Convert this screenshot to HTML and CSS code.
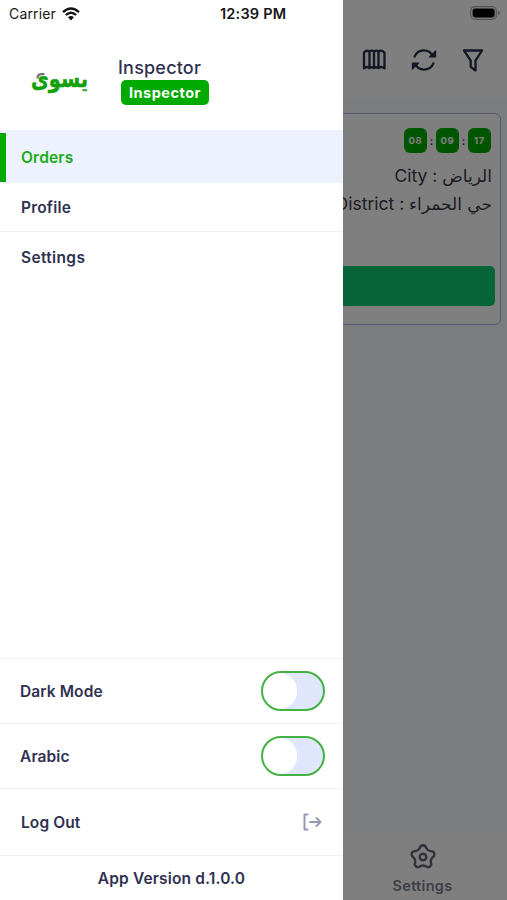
FILE: index.html
```html
<!DOCTYPE html>
<html lang="en">
<head>
<meta charset="utf-8">
<title>Orders</title>
<link rel="stylesheet" href="styles.css">
</head>
<body>
<div class="app">
  <main class="screen">
    <header class="topbar">
      <div class="battery-row">
        <svg class="battery" width="30" height="14" viewBox="0 0 30 14"><rect x=".7" y=".7" width="25.600" height="12.600" rx="4" fill="none" stroke="#aaa" stroke-width="1.200"/><rect x="2.600" y="2.600" width="22" height="8.800" rx="2.400" fill="#000"/><path d="M28 5v4q2-.6 2-2t-2-2z" fill="#aaa"/></svg>
      </div>
      <nav class="tools">
        <svg class="icon" width="24" height="22" viewBox="0 0 24 22"><path d="M2 3.600Q4.500.6 7.500 2.600 9.750.6 12 2.600 14.250.6 16.500 2.600 19.500.6 22.500 3.600V19.400Q19.500 16.800 16.500 19.200 14.250 17.200 12 19.200 9.750 17.200 7.500 19.200 4.500 16.800 2 19.400ZM7.500 2.600v16.600M12 2.600v16.600M16.500 2.600v16.600"/></svg>
        <svg class="icon" width="26" height="24" viewBox="0 0 26 24"><path d="M3.600 8.600A10 10 0 0 1 21.800 8M22.400 15.400A10 10 0 0 1 4.200 16"/><path d="M24.600 3v6h-6.200zM1.400 21v-6h6.200z" fill="#29304a" stroke-width="1.200"/></svg>
        <svg class="icon" width="22" height="24" viewBox="0 0 22 24"><path d="M2 2.500H20L13.500 12.600V22.500L8.700 18.800V12.600Z"/></svg>
      </nav>
    </header>
    <section class="content">
      <article class="order">
        <div class="timer"><b>08</b><i>:</i><b>09</b><i>:</i><b>17</b></div>
        <p class="line">City : <span lang="ar">الرياض</span></p>
        <p class="line">District : <span lang="ar">حي الحمراء</span></p>
        <div class="action"></div>
      </article>
    </section>
    <footer class="tabbar">
      <div class="tab">
        <svg width="26" height="26" viewBox="-13 -13 26 26"><path d="M-3.200-9C-2.400-12.700 2.400-12.700 3.200-9Q4.580-6.300 7.570-5.820C11.340-6.200 12.820-1.640 9.550.26Q7.400 2.400 7.880 5.400C9.410 8.860 5.530 11.680 2.700 9.160Q0 7.800-2.700 9.160C-5.530 11.680-9.410 8.860-7.880 5.400Q-7.400 2.400-9.550.26C-12.820-1.640-11.340-6.200-7.570-5.820Q-4.580-6.300-3.200-9Z"/><circle r="3.300"/></svg>
        <span>Settings</span>
      </div>
    </footer>
  </main>
  <div class="scrim"></div>
  <aside class="drawer">
    <div class="status">
      <span class="carrier">Carrier</span>
      <svg width="18" height="14" viewBox="0 0 18 14"><path d="M1 5.100Q9-2.200 17 5.100M3.800 8Q9 3.400 14.200 8" fill="none" stroke="#111" stroke-width="2.300"/><path d="M6.100 10.300Q9 7.900 11.900 10.300L9 13.500Z" fill="#111"/></svg>
      <time class="clock">12:39 PM</time>
    </div>
    <div class="profile">
      <svg class="logo" width="60" height="30" viewBox="0 0 60 30">
        <text x="59" y="18" direction="rtl" textLength="57" lengthAdjust="spacingAndGlyphs">يسوى</text>
        <path d="M8.500 9.500Q8.500 5.500 12 5.200h3.500" fill="none" stroke="#77717b" stroke-width="2.200"/>
      </svg>
      <div class="who">
        <div class="name">Inspector</div>
        <span class="role">Inspector</span>
      </div>
    </div>
    <nav class="menu">
      <a class="item active">Orders</a>
      <a class="item">Profile</a>
      <a class="item last">Settings</a>
    </nav>
    <div class="options">
      <div class="option"><span>Dark Mode</span><div class="switch"></div></div>
      <div class="option"><span>Arabic</span><div class="switch"></div></div>
      <div class="option logout"><span>Log Out</span>
        <svg width="20" height="18" viewBox="0 0 20 18"><path d="M5.500 1.500H2.500V16.500H5.500M8 9H18.500M14.500 5 18.500 9 14.500 13"/></svg>
      </div>
      <div class="version">App Version d.1.0.0</div>
    </div>
  </aside>
</div>
</body>
</html>
```
FILE: styles.css
```css
* { box-sizing: border-box; }
body { margin: 0; font-family: Inter, "Noto Sans", "DejaVu Sans", sans-serif; color: #2f3150; }
.app { position: relative; width: 507px; height: 900px; overflow: hidden; }
.screen { display: flex; flex-direction: column; height: 900px; background: #f6f9fc; }
.topbar { height: 97px; background: #fff; }
.battery-row { display: flex; justify-content: flex-end; height: 28px; padding: 6px 7px 0 0; }
.tools { display: flex; justify-content: flex-end; align-items: center; gap: 25px; height: 64px; padding-right: 23px; }
.icon { fill: none; stroke: #29304a; stroke-width: 2.3; stroke-linejoin: round; stroke-linecap: round; }
.content { flex: 1; padding: 16px 6px 0; }
.order { height: 212px; padding: 14px 5px 0; border: 1px solid #aaaae8; border-radius: 6px; background: #fff; }
.timer { display: flex; justify-content: flex-end; align-items: center; padding-right: 4px; }
.timer b { width: 23px; height: 25px; border-radius: 6px; background: #0a0; color: #fff; font-size: 9.5px; line-height: 25px; letter-spacing: .6px; text-align: center; }
.timer i { width: 9px; font-size: 11px; font-style: normal; font-weight: 600; text-align: center; }
.line { height: 28px; margin: 0; padding-right: 3px; font-size: 17.5px; line-height: 28px; text-align: right; color: #3a3b48; white-space: nowrap; }
.timer + .line { margin-top: 9px; }
.line span { font-family: "DejaVu Sans", sans-serif; font-size: 17px; }
.action { height: 40px; margin-top: 48px; border-radius: 5px; background: #0dca70; }
.tabbar { display: flex; justify-content: flex-end; height: 68px; background: #fff; }
.tab { display: flex; flex-direction: column; align-items: center; width: 169px; padding-top: 12px; color: #7a7e8e; font-size: 14.5px; font-weight: 600; line-height: 18px; letter-spacing: .3px; }
.tab span { margin-top: 7px; }
.tab svg { fill: none; stroke: #626577; stroke-width: 2.4; stroke-linejoin: round; }
.scrim { position: absolute; inset: 0; background: rgba(0, 0, 0, .5); }
.drawer { position: absolute; top: 0; left: 0; display: flex; flex-direction: column; width: 343px; height: 900px; background: #fff; }
.status { display: flex; align-items: center; height: 27px; padding-left: 9px; color: #161616; }
.carrier { width: 53px; font-size: 14px; letter-spacing: .15px; }
.clock { margin-left: 140px; font-size: 14.5px; font-weight: 600; letter-spacing: .2px; white-space: nowrap; }
.profile { display: flex; height: 103px; padding-left: 29px; }
.logo { margin-top: 42px; overflow: visible; }
.logo text { fill: #13a00c; stroke: #13a00c; stroke-width: .5px; font: bold 24px "DejaVu Sans", sans-serif; }
.who { padding: 30px 0 0 29px; }
.name { font-size: 18px; font-weight: 500; line-height: 22px; letter-spacing: .2px; }
.role { display: block; width: 88px; height: 25px; margin: 1px 0 0 3px; border-radius: 5px; background: #0a0; color: #fff; font-size: 14.5px; font-weight: 700; line-height: 25px; letter-spacing: .6px; text-align: center; }
.role { letter-spacing: .5px; }
.menu { flex: 1; }
.item { display: flex; align-items: center; height: 49px; padding-left: 21px; border-bottom: 1px solid #f0f2f5; font-size: 15.5px; font-weight: 600; letter-spacing: .2px; }
.item.active { height: 53px; padding: 1px 0 0 21px; border-bottom: 0; background: linear-gradient(#0a0, #0a0) 0 3px / 6px 49px no-repeat #eef2fe; color: #18ac18; }
.item.last { height: 50px; border-bottom: 0; letter-spacing: .35px; }
.options { border-top: 1px solid #f0f2f5; }
.option { display: flex; align-items: center; justify-content: space-between; height: 65px; padding: 0 18px 0 20px; border-bottom: 1px solid #f0f2f5; font-size: 15.5px; font-weight: 600; letter-spacing: .1px; }
.option.logout { height: 67px; padding: 0 21px; }
.logout svg { fill: none; stroke: #949bb5; stroke-width: 2; stroke-linejoin: round; stroke-linecap: round; }
.switch { width: 64px; height: 40px; border: 2px solid #43b243; border-radius: 20px; background: radial-gradient(circle at 16px 50%, #fff 17.8px, #e0e7fd 18.5px); }
.version { height: 44px; line-height: 46px; text-align: center; font-size: 15.5px; font-weight: 600; letter-spacing: .15px; }
```
